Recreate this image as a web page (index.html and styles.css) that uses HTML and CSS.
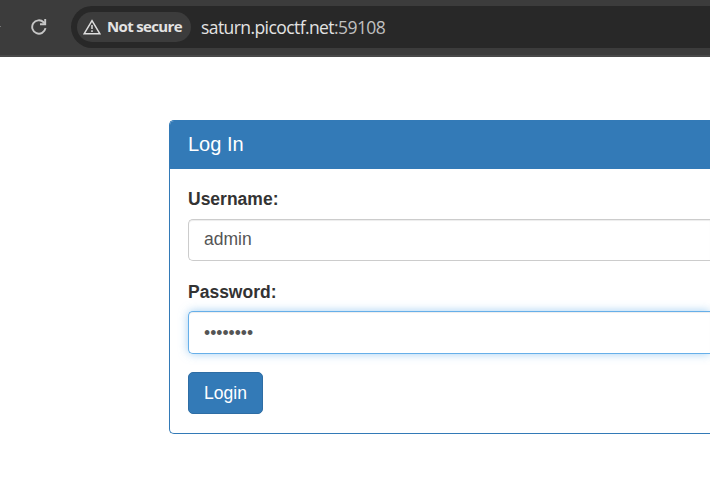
FILE: index.html
```
<!DOCTYPE html>
<html lang="en">
<head>
<meta charset="utf-8">
<title>Log In</title>
<link rel="stylesheet" href="styles.css">
</head>
<body>
<header class="toolbar">
  <span class="back-tip"></span>
  <svg class="reload" width="16" height="16" viewBox="0 0 16 16" fill="none" stroke="#c7c7c7" stroke-width="1.9"><path d="M14.5 9.2A6.7 6.7 0 1 1 12.6 3.2L14.3 4.9"/><path d="M14.2 0V5.3H9"/></svg>
  <div class="address">
    <div class="security">
      <svg width="18" height="16" viewBox="0 0 18 16" fill="none" stroke="#dedede" stroke-width="1.5"><path d="M9 1.6L16.8 14.7H1.2Z"/><path d="M9 6.1V10M9 11.3V12.9"/></svg>
      <span class="security-text">Not secure</span>
    </div>
    <span class="url">saturn.picoctf.net<span class="port">:59108</span></span>
  </div>
</header>
<main class="panel">
  <h3 class="panel-heading">Log In</h3>
  <form class="panel-body">
    <label for="user">Username:</label>
    <input class="field" id="user" type="text" value="admin">
    <label class="password-label" for="pass">Password:</label>
    <input class="field active" id="pass" type="password" value="password">
    <button class="login" type="button">Login</button>
  </form>
</main>
</body>
</html>
```
FILE: styles.css
```
* { box-sizing: border-box; }
body {
  margin: 0;
  background: #fff;
  overflow: hidden;
  font: 17.5px/25px "Liberation Sans", Arial, sans-serif;
  color: #333;
}
.toolbar {
  height: 57px;
  display: flex;
  align-items: flex-start;
  background: #3c3c3c;
  border-bottom: 2px solid #494949;
  font-family: "Open Sans", "Noto Sans", sans-serif;
}
.back-tip { width: 1px; height: 1px; margin-top: 26px; background: #777; }
.reload { margin: 19px 0 0 30px; flex: none; }
.address {
  flex: 1;
  height: 42px;
  margin: 6px 0 0 24px;
  padding-left: 6px;
  border-radius: 21px 0 0 21px;
  background: #282828;
  display: flex;
  align-items: center;
}
.security {
  width: 114px;
  height: 30px;
  border-radius: 15px;
  background: #3c3c3c;
  padding-left: 6px;
  display: flex;
  align-items: center;
  color: #e3e3e3;
  font-size: 15px;
  font-weight: 700;
  letter-spacing: -.65px;
}
.security svg { flex: none; }
.security-text { margin: -1px 0 0 6px; white-space: nowrap; }
.url { margin-left: 10px; font-size: 17.5px; letter-spacing: -.58px; color: #e3e3e3; white-space: nowrap; }
.port { color: #c0c0c0; }
.panel {
  height: 314px;
  margin: 63px 0 0 169px;
  border: 1px solid #337ab7;
  border-right: 0;
  border-radius: 5px 0 0 5px;
  box-shadow: 0 1px 1px rgba(0, 0, 0, .05);
}
.panel-heading {
  height: 48px;
  margin: 0;
  padding: 11px 18px 0;
  border-radius: 4px 0 0 0;
  background: #337ab7;
  color: #fff;
  font-size: 20px;
  font-weight: 400;
  line-height: 24px;
}
.panel-body { padding: 18px 0 18px 18px; }
label { display: block; height: 25px; margin-bottom: 7px; font-weight: 700; }
.password-label { padding-top: 1px; }
.field {
  display: block;
  width: 100%;
  height: 42px;
  margin: 0 0 18px;
  padding: 7px 15px 9px;
  border: 1px solid #ccc;
  border-right: 0;
  border-radius: 5px 0 0 5px;
  outline: 0;
  background: #fff;
  color: #555;
  font: inherit;
  box-shadow: inset 0 1px 1px rgba(0, 0, 0, .075);
}
.active {
  height: 43px;
  padding: 9px 15px 8px;
  border-color: #66afe9;
  box-shadow: inset 0 1px 1px rgba(0, 0, 0, .075), 0 0 10px rgba(102, 175, 233, .6);
}
.login {
  display: block;
  width: 75px;
  height: 42px;
  padding: 0;
  border: 1px solid #2e6da4;
  border-radius: 5px;
  background: #337ab7;
  color: #fff;
  font: inherit;
}
```
